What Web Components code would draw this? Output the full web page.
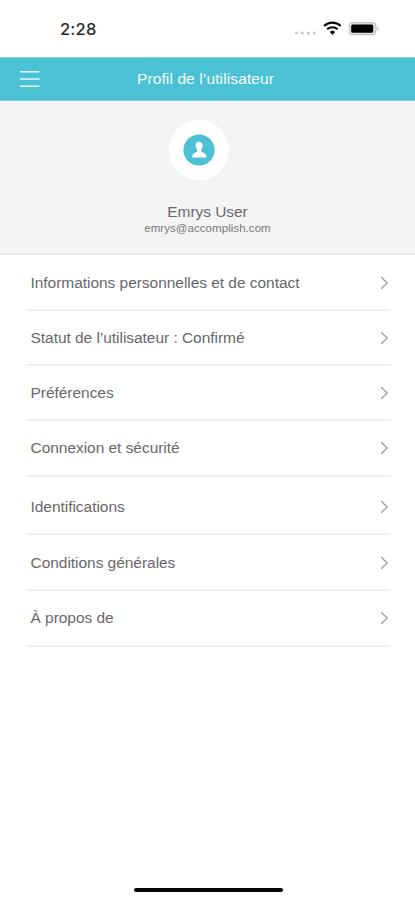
<!DOCTYPE html>
<html lang="fr">
<head>
<meta charset="utf-8">
<title>Profil de l'utilisateur</title>
<style>
html,body{margin:0;background:#fff}
body{width:415px;height:900px;overflow:hidden;font-family:"Liberation Sans",Arial,sans-serif;color:#68686a}
</style>
</head>
<body>
<profile-screen></profile-screen>
<script>
function define(name, html) {
  const template = document.createElement('template');
  template.innerHTML = html;
  customElements.define(name, class extends HTMLElement {
    constructor() {
      super();
      this.attachShadow({mode: 'open'}).appendChild(template.content.cloneNode(true));
    }
  });
}

define('status-bar', `
<style>
:host{display:flex;box-sizing:border-box;height:57px;padding:0 35px 0 60px;align-items:center;justify-content:space-between}
time{font:500 16.5px/20px Inter,sans-serif;color:#2a2a2a;letter-spacing:.2px;margin-top:1px}
svg{display:block}
</style>
<time>2:28</time>
<svg width="86" height="20" viewBox="0 0 86 20">
  <g fill="#c8c8c8"><circle cx="2.5" cy="14" r="1.5"/><circle cx="8.4" cy="14" r="1.5"/><circle cx="14.3" cy="14" r="1.5"/><circle cx="20.2" cy="14" r="1.5"/></g>
  <g fill="none" stroke="#0b0b0b" stroke-width="2.1"><path d="M30.1 7a12 12 0 0 1 16.6 0"/><path d="M33.2 10.3a7.5 7.5 0 0 1 10.4 0"/></g>
  <path d="M36 12.9a3.5 3.5 0 0 1 4.8 0L38.4 15.7z" fill="#0b0b0b" stroke="#0b0b0b" stroke-width=".5"/>
  <rect x="55.2" y="3.6" width="26.6" height="12" rx="3.4" fill="#e4e4e4" stroke="#c4c4c4" stroke-width="1.1"/>
  <rect x="57.2" y="5.4" width="22" height="8.4" rx="1.5" fill="#000"/>
  <path d="M83 7.5q2.6 2.1 0 4.2z" fill="#bbb"/>
</svg>`);

define('nav-bar', `
<style>
:host{display:grid;box-sizing:border-box;height:44px;grid-template-columns:48px 1fr 52px;align-items:center;background:#4bc2d3;border-top:1px solid #8ad7e2;border-bottom:1px solid #74cfdb;color:#f4feff}
svg{display:block;margin:-1px 0 0 20px}
h1{margin:0;text-align:center;font-weight:400;font-size:15.5px;line-height:20px;letter-spacing:.12px;white-space:nowrap;margin-top:-1px}
</style>
<svg width="20" height="18" viewBox="0 0 20 18" stroke="#e2fbfd" stroke-width="1.4"><path d="M0 1.7h19.5M0 9h19.5M0 16.2h19.5"/></svg>
<h1><slot></slot></h1>`);

define('user-card', `
<style>
:host{display:flex;box-sizing:border-box;height:154px;flex-direction:column;align-items:center;padding-top:19px;background:#f4f4f4;border-bottom:2px solid #ebebeb}
.avatar{display:grid;place-items:center;width:60px;height:60px;border-radius:50%;background:#fff;margin-right:17px}
.name{font-size:15.5px;line-height:18px;margin-top:23px;letter-spacing:-.05px}
.mail{font-size:11.5px;line-height:14px;letter-spacing:.05px;color:#78787a}
</style>
<div class="avatar"><svg width="32" height="32" viewBox="0 0 32 32"><circle cx="16" cy="16" r="15.6" fill="#4bc2d3"/><path fill="#fff" d="M16 7.8c2.6 0 3.9 1.9 3.6 4.4-.2 1.7-.8 2.7-1.5 3.6v1.5c.5 1.2 4.7 1.6 5.2 4.3l.2 2H9.1l.2-2c.5-2.7 4.5-3.1 5-4.3v-1.5c-.8-.9-1.4-1.9-1.6-3.6-.3-2.5.8-4.4 3.3-4.4z"/></svg></div>
<div class="name"><slot name="name"></slot></div>
<div class="mail"><slot name="mail"></slot></div>`);

define('menu-row', `
<style>
:host{display:flex;box-sizing:border-box;height:var(--h,55px);margin:0 24px 0 26px;padding:var(--t,18px) 2px 0 4.5px;align-items:flex-start;justify-content:space-between;border-bottom:2px solid #efeff0;font-size:15.5px;line-height:18px;letter-spacing:-.04px;white-space:nowrap}
svg{display:block;margin-top:1.5px}
</style>
<span><slot></slot></span>
<svg width="9" height="14" viewBox="0 0 9 14" fill="none" stroke="#9a9aa6" stroke-width="1.3"><path d="M1.2 1.2 7.2 7l-6 5.8"/></svg>`);

define('home-indicator', `
<style>
:host{display:block;width:149px;height:4px;border-radius:2px;background:#050505;margin:auto auto 8px 133.5px}
</style>`);

define('profile-screen', `
<style>
:host{display:flex;flex-direction:column;height:900px;background:#fff}
</style>
<status-bar></status-bar>
<nav-bar>Profil de l’utilisateur</nav-bar>
<user-card><span slot="name">Emrys User</span><span slot="mail">emrys@accomplish.com</span></user-card>
<menu-row style="--h:56px;--t:19px">Informations personnelles et de contact</menu-row>
<menu-row>Statut de l’utilisateur : Confirmé</menu-row>
<menu-row>Préférences</menu-row>
<menu-row style="--h:56px">Connexion et sécurité</menu-row>
<menu-row style="--h:58px;--t:21px">Identifications</menu-row>
<menu-row style="--h:56px;--t:19px">Conditions générales</menu-row>
<menu-row style="--h:56px">À propos de</menu-row>
<home-indicator></home-indicator>`);
</script>
</body>
</html>
